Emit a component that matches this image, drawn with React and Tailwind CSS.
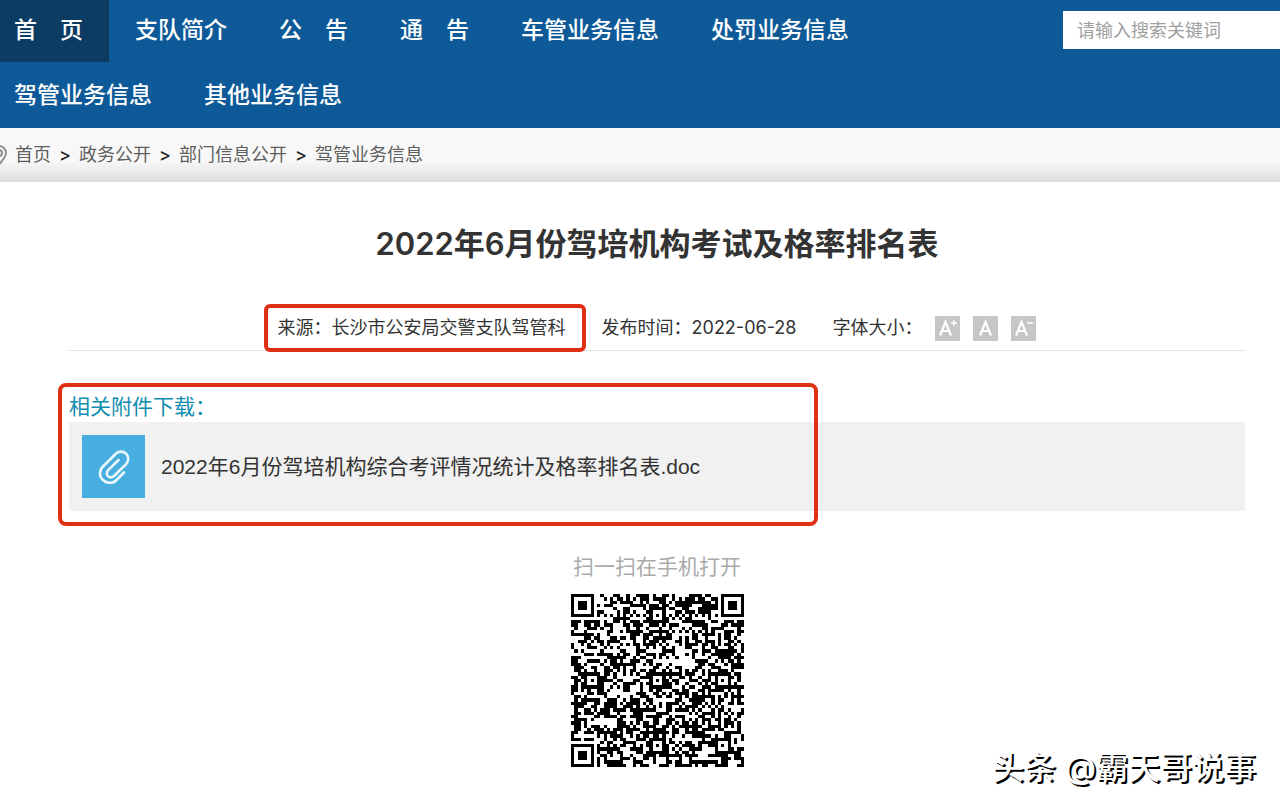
import React, { useState } from 'react';

const navItems = ['首　页', '支队简介', '公　告', '通　告', '车管业务信息', '处罚业务信息', '驾管业务信息', '其他业务信息'];

const crumbs = ['首页', '政务公开', '部门信息公开', '驾管业务信息'];

const QR_SIZE = 53;

// square ring with a solid centre, r = 3 for the corners, r = 2 for the small ones
function ring(x, y, cx, cy, r) {
  const d = Math.max(Math.abs(x - cx), Math.abs(y - cy));
  if (d > r + (r === 3 ? 1 : 0)) return null;
  if (r === 3) return d !== 2 && d !== 4;
  return d !== 1;
}

function buildQr() {
  const centres = [
    [3, 3, 3], [49, 3, 3], [3, 49, 3],
    [26, 6, 2], [6, 26, 2], [26, 26, 2], [46, 26, 2], [26, 46, 2], [46, 46, 2],
  ];
  let seed = 20220628;
  let path = '';
  for (let y = 0; y < QR_SIZE; y++) {
    for (let x = 0; x < QR_SIZE; x++) {
      seed = (seed * 1103515245 + 12345) % 2147483648;
      let on = (seed >> 16) % 100 < 52;
      if (x === 6 || y === 6) on = (x + y) % 2 === 0;
      for (const [cx, cy, r] of centres) {
        const hit = ring(x, y, cx, cy, r);
        if (hit !== null) on = hit;
      }
      if (on) path += `M${x} ${y}h1v1h-1z`;
    }
  }
  return path;
}

const qrPath = buildQr();

function QrCode() {
  return (
    <svg viewBox="0 0 53 53" className="w-[173px] h-[173px]" shapeRendering="crispEdges" role="img" aria-label="二维码">
      <path d={qrPath} fill="#000" />
    </svg>
  );
}

function PinIcon() {
  return (
    <svg viewBox="0 0 18 22" className="w-[18px] h-[22px] -ml-2.5 shrink-0" fill="none" stroke="#8f8f8f" strokeWidth="2">
      <path d="M9 20.5C5 16 2 12.500 2 9a7 7 0 0 1 14 0c0 3.500-3 7-7 11.500z" />
      <circle cx="9" cy="9" r="3" />
    </svg>
  );
}

function ClipIcon() {
  return (
    <svg viewBox="0 0 32 34" className="w-8 h-[34px]" fill="none" stroke="#e9f7fd" strokeWidth="2.6" strokeLinecap="round" strokeLinejoin="round">
      <path d="M26 22.500L18 30.500C14.500 34 8.500 33.500 5 30C1 26.500 1 20.500 4.500 17L17.500 4C20.500 1 25 .8 28 3.500C31 6.300 31 11 28.200 14L16 26C14.200 27.800 11.500 27.800 10 26.200C8.300 24.500 8.400 22 10.200 20.200L20.500 10" />
    </svg>
  );
}

function SizeButton({ sign, label, onClick }) {
  return (
    <button type="button" aria-label={label} onClick={onClick} className="w-[25px] h-[25px] bg-[#c6c6c6]">
      <svg viewBox="0 0 25 25" className="w-[25px] h-[25px]" fill="none" stroke="#fff" strokeWidth="2.2">
        <g transform={sign ? 'translate(-2 0)' : undefined}>
          <path d="M7 19.500L12.500 6L18 19.500M9 15h7" />
        </g>
        {sign && <path d="M16 7h6" strokeWidth="1.500" />}
        {sign === '+' && <path d="M19 4v6" strokeWidth="1.500" />}
      </svg>
    </button>
  );
}

function App() {
  const [keyword, setKeyword] = useState('');
  const [large, setLarge] = useState(false);

  return (
    <div className="relative min-h-screen overflow-hidden bg-white text-[#333] font-[Inter,'Noto_Sans_CJK_SC',sans-serif]">
      {/* Navigation */}
      <header className="flex items-start justify-between bg-[#0e5a98]">
        <nav className="flex flex-wrap gap-y-[3px] -ml-3 pr-10 pb-px">
          {navItems.map((item, index) => (
            <a
              key={item}
              href="#"
              className={`px-[26px] pb-0.5 text-[23px] leading-[60px] font-medium text-white ${index === 0 ? 'bg-[#0d3c62]' : ''}`}
            >
              {item}
            </a>
          ))}
        </nav>
        <input
          type="text"
          aria-label="搜索"
          placeholder="请输入搜索关键词"
          value={keyword}
          onChange={(e) => setKeyword(e.target.value)}
          className="mt-[11px] h-[38px] w-[217px] shrink-0 bg-white px-3.5 text-lg outline-none placeholder:text-[#a0a0a0]"
        />
      </header>

      {/* Breadcrumb */}
      <div className="flex items-center h-[54px] bg-linear-to-b from-[#f8f8f8] from-60% to-[#dedede] text-lg">
        <PinIcon />
        <div className="flex items-center pl-[7px]">
          {crumbs.map((crumb, index) => (
            <React.Fragment key={crumb}>
              {index > 0 && <span className="w-7 text-center font-medium text-[#222]">&gt;</span>}
              <a href="#" className="text-[#5e5e5e]">{crumb}</a>
            </React.Fragment>
          ))}
        </div>
      </div>

      <main className="pl-[69px] pr-[35px]">
        <h1 className="pt-10 text-center text-[31px] leading-[44px] font-semibold">
          2022年6月份驾培机构考试及格率排名表
        </h1>

        {/* Source, date and text size */}
        <div className="mt-10 flex h-[45px] items-center justify-center gap-9 border-b border-[#e2e2e2] text-lg whitespace-nowrap">
          <span className="relative">
            来源：长沙市公安局交警支队驾管科
            <span className="absolute -inset-y-2.5 -left-3.5 -right-5 rounded-md border-4 border-[#dd3015]" />
          </span>
          <span>发布时间：2022-06-28</span>
          <div className="flex items-center gap-[13px]">
            <span>字体大小：</span>
            <SizeButton sign="+" label="放大" onClick={() => setLarge(true)} />
            <SizeButton label="默认" onClick={() => setLarge(false)} />
            <SizeButton sign="-" label="缩小" onClick={() => setLarge(false)} />
          </div>
        </div>

        {/* Attachment */}
        <section className="relative mt-10">
          <h2 className="text-[21px] leading-[31px] text-[#0e8db0]">相关附件下载：</h2>
          <a href="#" className="flex items-center gap-4 bg-[#f1f1f1] p-[13px]">
            <span className="flex h-[63px] w-[63px] shrink-0 items-center justify-center bg-[#48aee0]">
              <ClipIcon />
            </span>
            <span className={`font-['Liberation_Sans','Noto_Sans_CJK_SC',sans-serif] ${large ? 'text-2xl' : 'text-[21px]'}`}>
              2022年6月份驾培机构综合考评情况统计及格率排名表.doc
            </span>
          </a>
          <div className="pointer-events-none absolute -left-[11px] -top-2 -bottom-[15px] w-[760px] rounded-lg border-4 border-[#dd3015]" />
        </section>

        {/* QR code */}
        <div className="mt-10 flex flex-col items-center">
          <p className="mb-3 text-[21px] leading-[31px] text-[#aaa]">扫一扫在手机打开</p>
          <QrCode />
        </div>
      </main>

      <div className="absolute right-6 bottom-4 text-[32px] leading-[46px] font-medium whitespace-nowrap text-white [text-shadow:2px_2px_0_#000]">
        头条 @霸天哥说事
      </div>
    </div>
  );
}

export default App;
